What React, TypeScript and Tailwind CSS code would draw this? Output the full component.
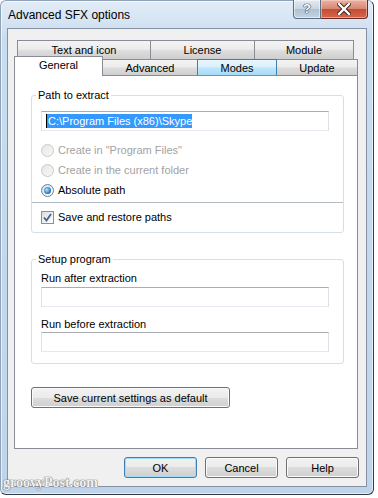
import React from 'react';

const tabBg = 'bg-[linear-gradient(#f4f4f4,#ececec_45%,#dcdcdc_55%,#cfcfcf)]';
const btnBg = 'bg-[linear-gradient(#f2f2f2,#ebebeb_50%,#dddddd_50%,#cfcfcf)]';

const Radio = ({ checked, disabled, label }: { checked?: boolean; disabled?: boolean; label: string }) => (
  <div className="flex items-center h-[20px]">
    <div
      className={
        'w-[13px] h-[13px] rounded-full border flex items-center justify-center ' +
        (disabled
          ? 'border-[#c9c9c9] bg-[linear-gradient(135deg,#e6e6e6,#f8f8f8)]'
          : 'border-[#6d7f93] bg-[linear-gradient(135deg,#d8dde3,#ffffff)]')
      }
    >
      {checked && (
        <div className="w-[7px] h-[7px] rounded-full bg-[radial-gradient(circle_at_40%_40%,#b9e4ff,#2a7fc4_60%,#123f6e)]" />
      )}
    </div>
    <span className={'ml-[4px] ' + (disabled ? 'text-[#a2a2a2]' : 'text-black')}>{label}</span>
  </div>
);

const Tab = ({ label, className }: { label: string; className: string }) => (
  <div className={'flex justify-center text-black ' + className}>{label}</div>
);

const Button = ({ label, className, def }: { label: string; className: string; def?: boolean }) => (
  <div
    className={
      'h-[21px] rounded-[3px] border flex items-center justify-center text-black ' +
      btnBg +
      ' ' +
      (def
        ? 'border-[#3c7fb1] shadow-[inset_0_0_0_1px_#9fdcf7]'
        : 'border-[#707070] shadow-[inset_0_0_0_1px_#fbfbfb]') +
      ' ' +
      className
    }
  >
    {label}
  </div>
);

const Field = () => (
  <div className="ml-[9px] w-[288px] h-[20px] border border-[#abadb3] border-l-[#e2e3ea] border-r-[#dbdfe6] border-b-[#e3e9ef] bg-white" />
);

export default function App() {
  return (
    <div className="w-[378px] h-[498px] bg-white relative overflow-hidden font-['Liberation_Sans',Arial,sans-serif] text-[11px] leading-[14px]">
      <div className="w-[374px] h-[495px] rounded-[6px] border border-[#343c45] border-t-[#8fa3b8] border-l-[#8fa3b8] bg-[linear-gradient(#e2ecf7,#c9dcf0_40px,#bfd4ea)] shadow-[inset_0_0_0_1px_rgba(255,255,255,0.6)] flex flex-col">
        {/* title bar */}
        <div className="h-[27px] flex items-start pl-[7px]">
          <span className="mt-[7px] text-[12px] text-black">Advanced SFX options</span>
          <div className="ml-auto mr-[5px] -mt-[1px] flex h-[19px]">
            <div className="w-[28px] h-full border border-t-0 border-[#5f6f82] rounded-bl-[4px] bg-[linear-gradient(#e3eaf2,#c8d5e3_50%,#adc0d4_50%,#c3d3e2)] flex items-center justify-center shadow-[inset_0_0_0_1px_rgba(255,255,255,0.5)]">
              <span className="text-[13px] font-bold text-white [text-shadow:0_0_1px_#333,0_0_1px_#333,0_0_1px_#333]">?</span>
            </div>
            <div className="w-[47px] h-full border border-t-0 border-l-0 border-[#6b2a20] rounded-br-[4px] bg-[linear-gradient(#eab3a3,#d98470_50%,#c64a30_50%,#d2694f)] flex items-center justify-center shadow-[inset_0_0_0_1px_rgba(255,220,210,0.5)]">
              <svg width="14" height="12" viewBox="0 0 14 12">
                <path d="M2 1 L12 11 M12 1 L2 11" stroke="#3a1a14" strokeWidth="4.2" strokeLinecap="square" />
                <path d="M2 1 L12 11 M12 1 L2 11" stroke="#ffffff" strokeWidth="2.4" strokeLinecap="square" />
              </svg>
            </div>
          </div>
        </div>

        {/* client area */}
        <div className="mx-[6px] h-[459px] border border-[#8391a2] bg-[#f0f0f0] pt-[11px]">
          <div className="ml-[6px] w-[344px]">
            {/* top tab row */}
            <div className="flex ml-[3px] h-[19px]">
              <Tab label="Text and icon" className={'w-[133px] pt-[2px] border-l border-t border-[#898c95] ' + tabBg} />
              <Tab label="License" className={'w-[104px] pt-[2px] border-l border-t border-[#898c95] ' + tabBg} />
              <Tab label="Module" className={'w-[100px] pt-[2px] border-l border-t border-r border-[#898c95] ' + tabBg} />
            </div>
            {/* bottom tab row */}
            <div className="flex h-[16px] items-start">
              <Tab
                label="General"
                className="relative z-10 -mt-[3px] h-[20px] w-[89px] pt-[1px] bg-white border border-b-0 border-[#898c95]"
              />
              <Tab label="Advanced" className={'h-full items-center w-[95px] border-t border-r border-[#898c95] ' + tabBg} />
              <Tab
                label="Modes"
                className="relative h-full items-center -ml-px w-[80px] border border-b-0 border-[#3c7fb1] bg-[linear-gradient(#eaf6fd,#d9f0fc_45%,#bee6fd_55%,#a7d9f5)]"
              />
              <Tab label="Update" className={'h-full items-center w-[81px] border-t border-r border-[#898c95] ' + tabBg} />
            </div>
            {/* tab page */}
            <div className="h-[374px] border border-[#898c95] bg-white pt-[12px]">
              <fieldset className="ml-[16px] w-[313px] border border-[#d5dfe5] rounded-[3px] pb-[6px]">
                <legend className="ml-[4px] px-[2px] leading-[14px] text-black">Path to extract</legend>
                <div className="mt-[9px] ml-[9px] w-[288px] h-[20px] border border-[#abadb3] border-l-[#e2e3ea] border-r-[#dbdfe6] border-b-[#e3e9ef] bg-white flex items-center pl-[4px]">
                  <span className="bg-[#3399ff] text-white leading-[14px] pl-[1px] border-l border-black">C:\Program Files (x86)\Skype</span>
                </div>
                <div className="mt-[9px] pl-[9px]">
                  <Radio disabled label={'Create in "Program Files"'} />
                  <Radio disabled label="Create in the current folder" />
                  <Radio checked label="Absolute path" />
                </div>
                <div className="mt-[2px] h-px bg-[#b5bcc4]" />
                <div className="mt-[5px] pl-[9px] flex items-center h-[18px]">
                  <div className="w-[13px] h-[13px] border border-[#8f8f8f] bg-[linear-gradient(135deg,#dcdcdc,#ffffff)] flex items-center justify-center">
                    <svg width="9" height="9" viewBox="0 0 9 9">
                      <path d="M1 4.5 L3.5 7.5 L8 1" fill="none" stroke="#4a5f97" strokeWidth="1.8" />
                    </svg>
                  </div>
                  <span className="ml-[4px] text-black">Save and restore paths</span>
                </div>
              </fieldset>

              <fieldset className="mt-[19px] ml-[16px] w-[313px] border border-[#d5dfe5] rounded-[3px] pb-[11px]">
                <legend className="ml-[4px] px-[2px] leading-[14px] text-black">Setup program</legend>
                <div className="mt-[5px] ml-[9px] leading-[15px] text-black">Run after extraction</div>
                <div className="mt-[1px]">
                  <Field />
                </div>
                <div className="mt-[10px] ml-[9px] leading-[15px] text-black">Run before extraction</div>
                <Field />
              </fieldset>

              <Button label="Save current settings as default" className="mt-[23px] ml-[16px] w-[199px]" />
            </div>
          </div>

          {/* dialog buttons */}
          <div className="mt-[8px] mr-[7px] flex justify-end gap-[8px]">
            <Button label="OK" def className="w-[73px]" />
            <Button label="Cancel" className="w-[73px]" />
            <Button label="Help" className="w-[73px]" />
          </div>
        </div>
      </div>

      <div className="absolute left-[3px] top-[475px] text-[14px] leading-[16px] font-['Liberation_Serif',serif] font-bold text-[#f2f2f2] [text-shadow:0_0_1px_#777,0_0_1px_#777,0_0_1px_#777]">
        groovyPost.com
      </div>
    </div>
  );
}
